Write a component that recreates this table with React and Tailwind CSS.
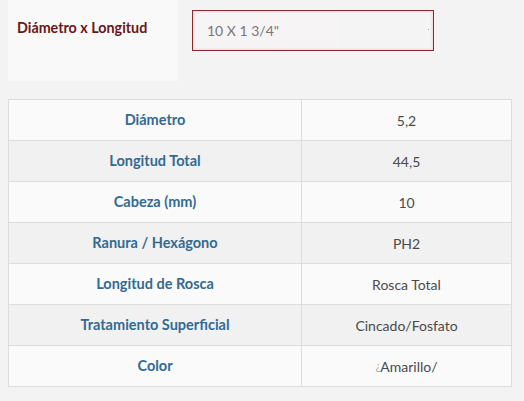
import React from 'react';

const rows = [
  ['Diámetro', '5,2'],
  ['Longitud Total', '44,5'],
  ['Cabeza (mm)', '10'],
  ['Ranura / Hexágono', 'PH2'],
  ['Longitud de Rosca', 'Rosca Total'],
  ['Tratamiento Superficial', 'Cincado/Fosfato'],
  ['Color', 'Amarillo/', '¿'],
];

function App() {
  return (
    <div className="w-[524px] h-[401px] bg-[#f3f3f3] font-['Lato',sans-serif] overflow-hidden">
      <div className="flex">
        <div className="ml-2 w-[170px] h-[81px] bg-[#f9f9f9] pl-[9px] pt-[15px]">
          <span className="text-[14.3px] font-bold text-[#6a1616]">Diámetro x Longitud</span>
        </div>
        <div className="ml-[14px] mt-[10px]">
          <div className="w-[242px] h-[41px] border border-[#8a2a2a] bg-[#f6f4f4] shadow-[inset_0_0_3px_rgba(220,120,120,0.45)] flex items-center pl-[14px] relative">
            <span className="text-[14px] text-[#777]">10 X 1 3/4"</span>
            <div className="absolute right-[6px] top-[4px] w-[88px] h-[31px] bg-[#f4f4f4]"></div>
            <div className="absolute right-[4px] top-[18px] w-px h-px bg-[#999]"></div>
          </div>
        </div>
      </div>
      <div className="mx-2 mt-[18px] w-[504px] border border-[#dddddd] border-b-0">
        {rows.map(([label, value, prefix], i) => (
          <div
            key={label}
            className={`flex h-[41px] border-b border-[#dddddd] ${i % 2 === 0 ? 'bg-[#fafafa]' : 'bg-[#f1f1f1]'}`}
          >
            <div className="w-[293px] border-r border-[#dddddd] flex items-center justify-center text-[14.5px] font-bold text-[#326a93]">
              {label}
            </div>
            <div className="flex-1 flex items-center justify-center text-[14px] text-[#4a4a4a]">
              {prefix && <span className="text-[#aaa] text-[11px]">{prefix}</span>}
              {value}
            </div>
          </div>
        ))}
      </div>
    </div>
  );
}

export default App;
